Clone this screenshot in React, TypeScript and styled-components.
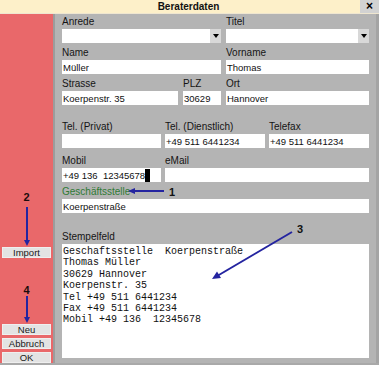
import styled, { createGlobalStyle } from "styled-components"

const GlobalStyle = createGlobalStyle`
	html, body {
		margin: 0;
		padding: 0;
		background: #a9a9a9;
	}
	body {
		font-family: "Liberation Sans", Arial, sans-serif;
	}
`

const ARROW = "#2424a0"

const Window = styled.div`
	position: relative;
	width: 379px;
	height: 365px;
	display: flex;
	flex-direction: column;
	background: #a9a9a9;
	overflow: hidden;
`

const TitleBar = styled.div`
	height: 14px;
	display: flex;
	background: #fdf0c9;
	box-sizing: border-box;
	border-bottom: 1px solid #efe6d0;
`

const Title = styled.div`
	flex: 1;
	padding-left: 17px;
	text-align: center;
	font-weight: bold;
	font-size: 10px;
	line-height: 13px;
	color: #111;
`

const CloseButton = styled.div`
	width: 19px;
	display: grid;
	place-items: center;
	background: #d2d2d2;
	font-weight: bold;
	font-size: 12px;
	line-height: 13px;
	color: #000;
`

const Body = styled.div`
	flex: 1;
	display: flex;
	margin-bottom: 3px;
`

const Sidebar = styled.div`
	width: 55px;
	box-sizing: border-box;
	padding: 0 3px;
	display: flex;
	flex-direction: column;
	align-items: center;
	background: #e9686a;
	border-right: 2px solid #9c9c9c;
`

const Marker = styled.div<{ $top: number }>`
	margin-top: ${(p) => p.$top}px;
	height: 10px;
	font-weight: bold;
	font-size: 11px;
	line-height: 10px;
	color: #1c0c0c;
`

const SideButton = styled.div<{ $top: number }>`
	margin-top: ${(p) => p.$top}px;
	width: 49px;
	height: 11px;
	box-sizing: border-box;
	background: #e3e3e3;
	border: 1px solid #efefef;
	text-align: center;
	font-size: 9.5px;
	line-height: 9px;
	color: #1a1a1a;
`

const Content = styled.div`
	flex: 1;
	display: flex;
	flex-direction: column;
	padding: 0 7px 5px 7px;
	background: #b4b4b4;
	border-right: 3px solid #a4a4a4;
`

const Row = styled.div<{ $cols: string; $top: number; $gap?: number }>`
	display: grid;
	grid-template-columns: ${(p) => p.$cols};
	column-gap: ${(p) => p.$gap ?? 5}px;
	margin-top: ${(p) => p.$top}px;
`

const Field = styled.div<{ $grow?: boolean }>`
	display: flex;
	flex-direction: column;
	min-width: 0;
	${(p) => (p.$grow ? "flex: 1;" : "")}
`

const Label = styled.div<{ $color?: string }>`
	height: 13px;
	margin-bottom: 1px;
	font-size: 10px;
	line-height: 13px;
	color: ${(p) => p.$color ?? "#141414"};
	white-space: nowrap;
`

const Box = styled.div`
	height: 14px;
	display: flex;
	align-items: center;
	padding-left: 1px;
	background: #fff;
	font-size: 9.5px;
	color: #111;
	white-space: pre;
`

const Value = styled.span`
	flex: 1;
`

const Caret = styled.span`
	width: 5px;
	height: 13px;
	margin-right: 10px;
	background: #000;
`

const DropButton = styled.span`
	width: 11px;
	height: 14px;
	display: grid;
	place-items: center;
	background: #d8d8d8;

	&::after {
		content: "";
		border-left: 3.5px solid transparent;
		border-right: 3.5px solid transparent;
		border-top: 4px solid #000;
	}
`

const Stamp = styled.div`
	flex: 1;
	padding: 2px 1px;
	background: #fff;
	font-family: "Liberation Mono", "Courier New", monospace;
	font-size: 10px;
	line-height: 11.4px;
	color: #111;
	white-space: pre;
`

const Note = styled.div<{ $x: number; $y: number }>`
	position: absolute;
	left: ${(p) => p.$x}px;
	top: ${(p) => p.$y}px;
	font-weight: bold;
	font-size: 11px;
	line-height: 10px;
	color: #111;
`

const NoteArrow = styled.svg<{ $x: number; $y: number }>`
	position: absolute;
	left: ${(p) => p.$x}px;
	top: ${(p) => p.$y}px;
	overflow: visible;
`

function DownArrow({ height }: { height: number }) {
	return (
		<svg width="8" height={height} style={{ display: "block" }}>
			<line x1="4" y1="0" x2="4" y2={height - 5} stroke={ARROW} strokeWidth="2" />
			<polygon points={`1,${height - 6} 7,${height - 6} 4,${height}`} fill={ARROW} />
		</svg>
	)
}

const stamp = [
	"Geschaftsstelle  Koerpenstraße",
	"Thomas Müller",
	"30629 Hannover",
	"Koerpenstr. 35",
	"Tel +49 511 6441234",
	"Fax +49 511 6441234",
	"Mobil +49 136  12345678",
].join("\n")

export default function App() {
	return (
		<>
			<GlobalStyle />
			<Window>
				<TitleBar>
					<Title>Beraterdaten</Title>
					<CloseButton>×</CloseButton>
				</TitleBar>
				<Body>
					<Sidebar>
						<Marker $top={178}>2</Marker>
						<div style={{ marginTop: 5 }}>
							<DownArrow height={39} />
						</div>
						<SideButton $top={1}>Import</SideButton>
						<Marker $top={27}>4</Marker>
						<div style={{ marginTop: 1 }}>
							<DownArrow height={27} />
						</div>
						<SideButton $top={1}>Neu</SideButton>
						<SideButton $top={3}>Abbruch</SideButton>
						<SideButton $top={3}>OK</SideButton>
					</Sidebar>
					<Content>
						<Row $cols="159px 1fr" $top={1}>
							<Field>
								<Label>Anrede</Label>
								<Box>
									<Value />
									<DropButton />
								</Box>
							</Field>
							<Field>
								<Label>Titel</Label>
								<Box>
									<Value />
									<DropButton />
								</Box>
							</Field>
						</Row>
						<Row $cols="159px 1fr" $top={3}>
							<Field>
								<Label>Name</Label>
								<Box>Müller</Box>
							</Field>
							<Field>
								<Label>Vorname</Label>
								<Box>Thomas</Box>
							</Field>
						</Row>
						<Row $cols="116px 38px 1fr" $top={3}>
							<Field>
								<Label>Strasse</Label>
								<Box>Koerpenstr. 35</Box>
							</Field>
							<Field>
								<Label>PLZ</Label>
								<Box>30629</Box>
							</Field>
							<Field>
								<Label>Ort</Label>
								<Box>Hannover</Box>
							</Field>
						</Row>
						<Row $cols="99px 100px 1fr" $top={15} $gap={4}>
							<Field>
								<Label>Tel. (Privat)</Label>
								<Box />
							</Field>
							<Field>
								<Label>Tel. (Dienstlich)</Label>
								<Box>+49 511 6441234</Box>
							</Field>
							<Field>
								<Label>Telefax</Label>
								<Box>+49 511 6441234</Box>
							</Field>
						</Row>
						<Row $cols="99px 1fr" $top={6} $gap={4}>
							<Field>
								<Label>Mobil</Label>
								<Box>
									<span>+49 136  12345678</span>
									<Caret />
								</Box>
							</Field>
							<Field>
								<Label>eMail</Label>
								<Box />
							</Field>
						</Row>
						<Row $cols="1fr" $top={3}>
							<Field>
								<Label $color="#2f7a34">Geschäftsstelle</Label>
								<Box>Koerpenstraße</Box>
							</Field>
						</Row>
						<Field $grow style={{ marginTop: 17 }}>
							<Label>Stempelfeld</Label>
							<Stamp>{stamp}</Stamp>
						</Field>
					</Content>
				</Body>

				<NoteArrow $x={128} $y={187} width="36" height="8">
					<line x1="6" y1="4" x2="36" y2="4" stroke={ARROW} strokeWidth="2" />
					<polygon points="0,4 7,1 7,7" fill={ARROW} />
				</NoteArrow>
				<Note $x={169} $y={187}>1</Note>

				<NoteArrow $x={212} $y={231} width="81" height="49">
					<line x1="80" y1="1" x2="6" y2="44.5" stroke={ARROW} strokeWidth="2" />
					<polygon points="0,48 5,40.5 9,47" fill={ARROW} />
				</NoteArrow>
				<Note $x={297} $y={224}>3</Note>
			</Window>
		</>
	)
}
